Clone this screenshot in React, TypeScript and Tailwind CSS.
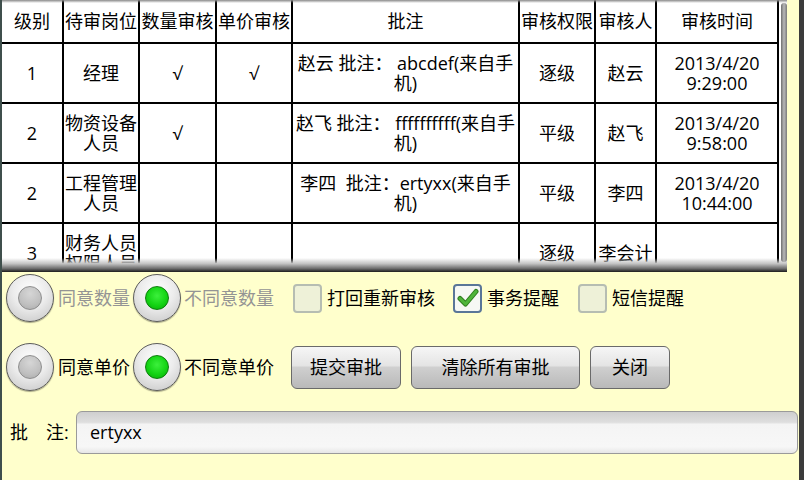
import React from "react";

const font = { fontFamily: '"Open Sans", "Noto Sans CJK SC", sans-serif' };

const cols = "grid-cols-[60px_74px_75px_74px_225px_74px_59px_120px]";

const header = ["级别", "待审岗位", "数量审核", "单价审核", "批注", "审核权限", "审核人", "审核时间"];

const rows: string[][][] = [
  [["1"], ["经理"], ["√"], ["√"], ["赵云 批注： abcdef(来自手", "机)"], ["逐级"], ["赵云"], ["2013/4/20", "9:29:00"]],
  [["2"], ["物资设备", "人员"], ["√"], [""], ["赵飞 批注： ffffffffff(来自手", "机)"], ["平级"], ["赵飞"], ["2013/4/20", "9:58:00"]],
  [["2"], ["工程管理", "人员"], [""], [""], ["李四  批注：ertyxx(来自手", "机)"], ["平级"], ["李四"], ["2013/4/20", "10:44:00"]],
  [["3"], ["财务人员", "权限人员"], [""], [""], [""], ["逐级"], ["李会计"], [""]],
];

function Cell({ lines, h }: { lines: string[]; h: string }) {
  return (
    <div className={`bg-white flex flex-col items-center justify-center text-center text-[18px] leading-[20px] text-black whitespace-pre ${h}`}>
      {lines.map((l, i) => (
        <span key={i}>{l}</span>
      ))}
    </div>
  );
}

function Radio({ checked }: { checked?: boolean }) {
  return (
    <div className="w-[48px] h-[48px] shrink-0 rounded-full border border-[#5c5c5c] bg-[radial-gradient(circle_at_50%_35%,#ffffff_0%,#ececec_45%,#c2c2c2_100%)] shadow-[0_1px_1px_rgba(0,0,0,0.35)] flex items-center justify-center">
      {checked ? (
        <div className="w-[24px] h-[24px] rounded-full border border-[#0d7d0d] bg-[radial-gradient(circle_at_50%_40%,#3cf03c_0%,#14d414_55%,#05a805_100%)]" />
      ) : (
        <div className="w-[24px] h-[24px] rounded-full border border-[#8e8e8e] bg-[radial-gradient(circle_at_50%_30%,#d6d6d6_0%,#c0c0c0_60%,#a9a9a9_100%)]" />
      )}
    </div>
  );
}

function Check({ checked }: { checked?: boolean }) {
  return (
    <div
      className={`w-[29px] h-[29px] shrink-0 rounded-[4px] border-2 flex items-center justify-center ${
        checked ? "border-[#5a7698] bg-[#f6f8f4]" : "border-[#b6bdb2] bg-[#eef1d8]"
      }`}
    >
      {checked && (
        <svg width="22" height="20" viewBox="0 0 22 20">
          <path d="M3 10.5 L8.5 16 L19 3.5" fill="none" stroke="#2f7d1e" strokeWidth="5" strokeLinecap="round" strokeLinejoin="round" />
          <path d="M3 10.5 L8.5 16 L19 3.5" fill="none" stroke="#4fb53a" strokeWidth="3" strokeLinecap="round" strokeLinejoin="round" />
        </svg>
      )}
    </div>
  );
}

function Btn({ label, w }: { label: string; w: string }) {
  return (
    <button
      className={`${w} h-[43px] shrink-0 rounded-[6px] border border-[#6a6a6a] bg-[linear-gradient(to_bottom,#f6f6f6_0%,#e4e4e4_45%,#cfcfcf_50%,#b9b9b9_100%)] text-[18px] text-black flex items-center justify-center`}
    >
      {label}
    </button>
  );
}

export default function App() {
  return (
    <div style={font} className="w-[804px] h-[480px] bg-[#ffffcc] border-l-2 border-l-[#3f4f4c] border-r-[5px] border-r-[#3b3b3b] flex flex-col overflow-hidden">
      {/* table */}
      <div className="relative h-[272px] w-[785px] bg-white overflow-hidden shrink-0">
        <div className={`grid ${cols} gap-[2px] bg-black w-[777px] pr-[2px]`}>
          {header.map((h) => (
            <Cell key={h} lines={[h]} h="h-[42px]" />
          ))}
          {rows.map((r, i) =>
            r.map((c, j) => <Cell key={`${i}-${j}`} lines={c} h="h-[58px]" />)
          )}
        </div>
        <div className="absolute top-0 left-0 right-0 h-[3px] bg-[linear-gradient(to_bottom,#8a8a8a,rgba(255,255,255,0))]" />
        <div className="absolute bottom-0 left-0 right-0 h-[14px] bg-[linear-gradient(to_bottom,rgba(255,255,255,0)_0%,#c4c4c4_40%,#6e6e6e_75%,#1c1c1c_100%)]" />
        <div className="absolute top-[3px] left-[779px] w-[6px] h-[259px] rounded-[3px] bg-[linear-gradient(to_right,#6e6e6e,#b8b8b8_50%,#7a7a7a)]" />
      </div>

      {/* controls */}
      <div className="flex flex-col pl-[4px] text-[18px]">
        <div className="flex items-center h-[48px] mt-[2px]">
          <Radio />
          <span className="ml-[4px] w-[72px] text-[#949494]">同意数量</span>
          <div className="ml-[3px]"><Radio checked /></div>
          <span className="ml-[3px] w-[90px] text-[#949494]">不同意数量</span>
          <div className="ml-[19px]"><Check /></div>
          <span className="ml-[5px] w-[108px] text-black">打回重新审核</span>
          <div className="ml-[18px]"><Check checked /></div>
          <span className="ml-[5px] w-[72px] text-black">事务提醒</span>
          <div className="ml-[19px]"><Check /></div>
          <span className="ml-[5px] text-black">短信提醒</span>
        </div>
        <div className="flex items-center h-[48px] mt-[21px]">
          <Radio />
          <span className="ml-[4px] w-[72px] text-black">同意单价</span>
          <div className="ml-[3px]"><Radio checked /></div>
          <span className="ml-[3px] w-[90px] text-black">不同意单价</span>
          <div className="ml-[17px]"><Btn label="提交审批" w="w-[110px]" /></div>
          <div className="ml-[10px]"><Btn label="清除所有审批" w="w-[169px]" /></div>
          <div className="ml-[10px]"><Btn label="关闭" w="w-[80px]" /></div>
        </div>
        <div className="flex items-center h-[43px] mt-[20px] pr-[1px]">
          <span className="ml-[4px] w-[66px] text-black">批　注:</span>
          <div className="flex-1 h-[43px] rounded-[6px] border border-[#9a9a9a] bg-[linear-gradient(to_bottom,#cfcfcf_0%,#dedede_25%,#f4f4f4_30%,#f7f7f7_85%,#e6e6e6_100%)] flex items-center pl-[13px] text-black">
            ertyxx
          </div>
        </div>
      </div>
    </div>
  );
}
